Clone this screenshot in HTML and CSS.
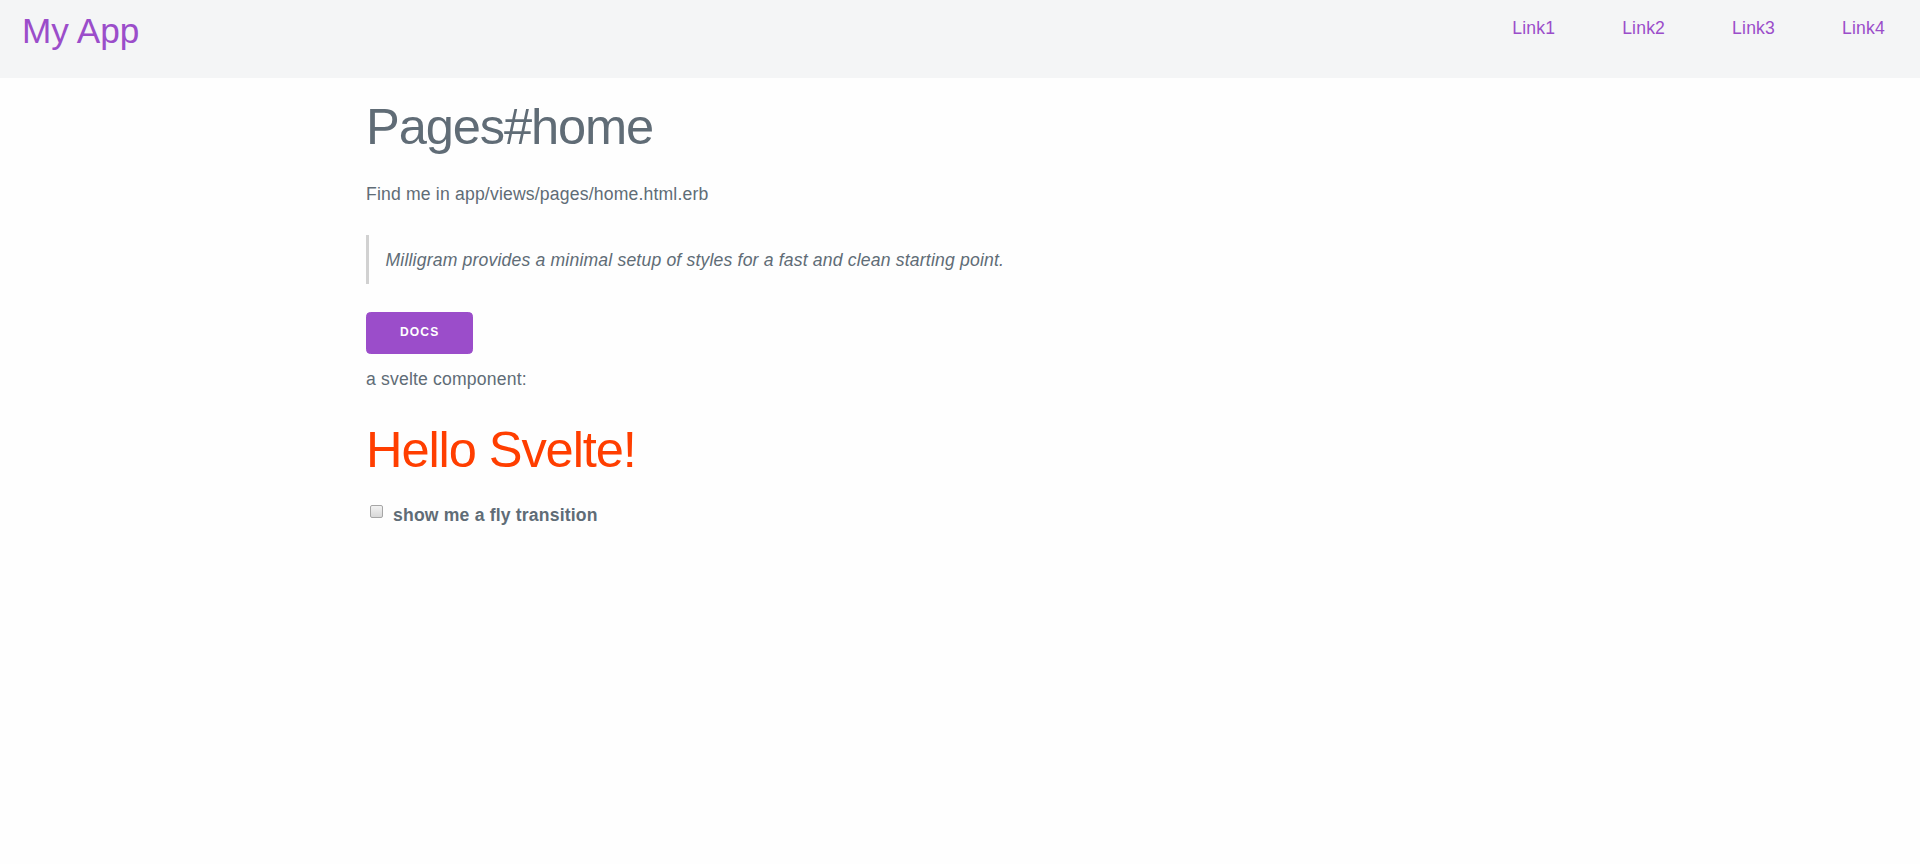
FILE: index.html
```html
<!DOCTYPE html>
<html lang="en">
<head>
<meta charset="utf-8">
<title>My App</title>
<link rel="stylesheet" href="styles.css">
</head>
<body>
<nav class="topbar">
  <a class="brand" href="#">My App</a>
  <div class="nav-links">
    <a href="#">Link1</a>
    <a href="#">Link2</a>
    <a href="#">Link3</a>
    <a href="#">Link4</a>
  </div>
</nav>
<main class="container">
  <h1>Pages#home</h1>
  <p>Find me in app/views/pages/home.html.erb</p>
  <blockquote>
    <p><em>Milligram provides a minimal setup of styles for a fast and clean starting point.</em></p>
  </blockquote>
  <a class="button" href="#">Docs</a>
  <p>a svelte component:</p>
  <div class="svelte-app">
    <h1 class="hello">Hello Svelte!</h1>
    <label class="check"><input type="checkbox" class="box"> show me a fly transition</label>
  </div>
</main>
</body>
</html>
```
FILE: styles.css
```css
html {
  font-size: 11px;
}
*, *::before, *::after {
  box-sizing: border-box;
}
body {
  margin: 0;
  background: #fefefe;
  color: #606c76;
  font-family: "Liberation Sans", Arial, sans-serif;
  font-size: 1.6rem;
  font-weight: 400;
  letter-spacing: .01em;
  line-height: 1.6;
}
a {
  color: #9b4dca;
  text-decoration: none;
}
.topbar {
  height: 78px;
  background: #f4f5f6;
  display: flex;
  justify-content: space-between;
  align-items: flex-start;
  padding: 0 35px 0 22px;
}
.brand {
  font-size: 3.2rem;
  line-height: 42px;
  margin-top: 10px;
  letter-spacing: 0;
}
.nav-links {
  display: flex;
  gap: 67px;
  margin-top: 14px;
}
.nav-links a {
  line-height: 1.6;
}
.container {
  max-width: 112rem;
  margin: 0 auto;
  padding: 19px 2rem 0;
}
h1 {
  font-size: 4.6rem;
  font-weight: 400;
  line-height: 1.2;
  letter-spacing: -.1rem;
  margin: 0 0 2rem;
}
p {
  margin: 0 0 2.5rem;
}
blockquote {
  border-left: .3rem solid #d1d1d1;
  margin: 0 0 2.5rem;
  padding: 1rem 1.5rem 10px;
}
blockquote p {
  margin-bottom: 0;
}
.button {
  display: inline-block;
  background: #9b4dca;
  border: .1rem solid #9b4dca;
  border-radius: .4rem;
  color: #ffffff;
  font-size: 1.1rem;
  font-weight: 700;
  height: 3.8rem;
  line-height: 3.6rem;
  letter-spacing: .1rem;
  padding: 0 3rem;
  text-transform: uppercase;
  margin-bottom: 1rem;
  vertical-align: top;
}
.hello {
  color: #ff3e00;
  margin-bottom: 20px;
}
.check {
  display: block;
  font-size: 1.6rem;
  font-weight: 700;
  margin-bottom: .5rem;
}
.box {
  appearance: none;
  -webkit-appearance: none;
  width: 13px;
  height: 13px;
  margin: 3px 5px 3px 4px;
  border: 1px solid #a6a6a6;
  border-radius: 2px;
  background: linear-gradient(#f2f2f2, #d8d8d8);
  vertical-align: 0;
}
```
